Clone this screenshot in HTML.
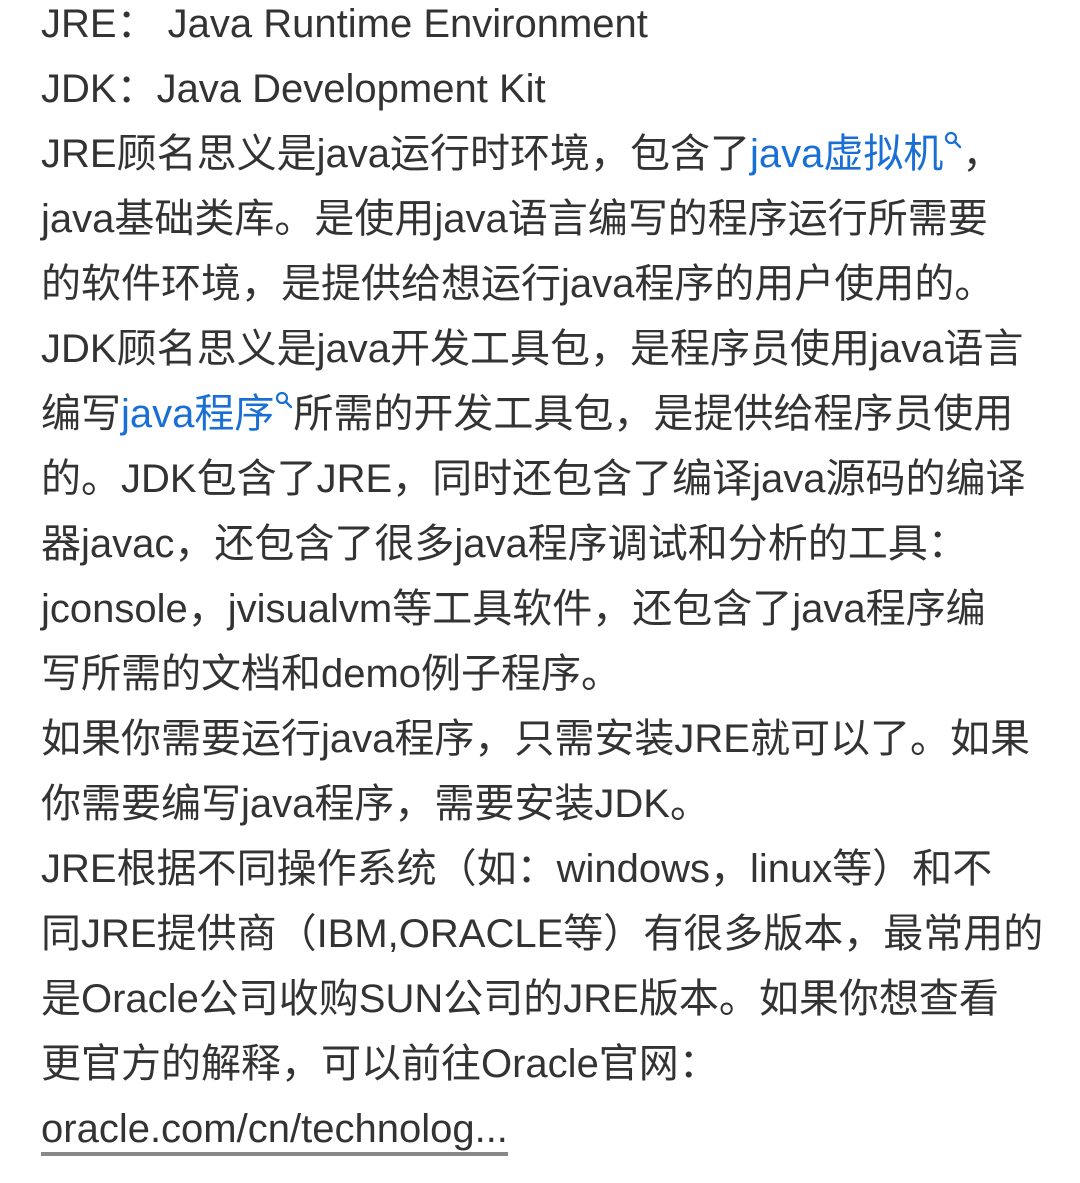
<!DOCTYPE html>
<html><head><meta charset="utf-8"><style>
html,body{margin:0;padding:0;background:#fff;width:1080px;height:1183px;overflow:hidden}
.w{position:absolute;left:41px;top:-8px;font-family:"Liberation Sans","Noto Sans CJK SC",sans-serif;font-size:40px;color:#333;line-height:65px;white-space:nowrap}
.l{height:65px;overflow:visible}
.b{color:#1a6fd6}
.s{display:inline-block;width:18px;height:18px;position:relative;top:-18px;margin-left:1px}
.u{border-bottom:4px solid #888;padding-bottom:1px}
</style></head><body><div class="w">
<div class="l">JRE：&nbsp;Java Runtime Environment</div>
<div class="l">JDK：Java Development Kit</div>
<div class="l">JRE顾名思义是java运行时环境，包含了<span class="b">java虚拟机<svg class="s" viewBox="0 0 18 18"><circle cx="7" cy="7" r="5" fill="none" stroke="#1a6fd6" stroke-width="2.2"/><line x1="10.5" y1="10.5" x2="16" y2="16" stroke="#1a6fd6" stroke-width="2.4" stroke-linecap="round"/></svg></span>，</div>
<div class="l">java基础类库。是使用java语言编写的程序运行所需要</div>
<div class="l">的软件环境，是提供给想运行java程序的用户使用的。</div>
<div class="l">JDK顾名思义是java开发工具包，是程序员使用java语言</div>
<div class="l">编写<span class="b">java程序<svg class="s" viewBox="0 0 18 18"><circle cx="7" cy="7" r="5" fill="none" stroke="#1a6fd6" stroke-width="2.2"/><line x1="10.5" y1="10.5" x2="16" y2="16" stroke="#1a6fd6" stroke-width="2.4" stroke-linecap="round"/></svg></span>所需的开发工具包，是提供给程序员使用</div>
<div class="l">的。JDK包含了JRE，同时还包含了编译java源码的编译</div>
<div class="l">器javac，还包含了很多java程序调试和分析的工具：</div>
<div class="l">jconsole，jvisualvm等工具软件，还包含了java程序编</div>
<div class="l">写所需的文档和demo例子程序。</div>
<div class="l">如果你需要运行java程序，只需安装JRE就可以了。如果</div>
<div class="l">你需要编写java程序，需要安装JDK。</div>
<div class="l">JRE根据不同操作系统（如：windows，linux等）和不</div>
<div class="l">同JRE提供商（IBM,ORACLE等）有很多版本，最常用的</div>
<div class="l">是Oracle公司收购SUN公司的JRE版本。如果你想查看</div>
<div class="l">更官方的解释，可以前往Oracle官网：</div>
<div class="l"><span class="u">oracle.com/cn/technolog...</span></div>
</div></body></html>
